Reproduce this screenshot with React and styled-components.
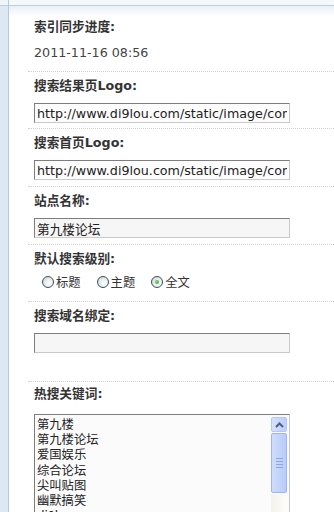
import React from 'react';
import styled, { createGlobalStyle } from 'styled-components';

const GlobalStyle = createGlobalStyle`
  html, body {
    margin: 0;
    padding: 0;
    overflow: hidden;
    background: #ffffff;
  }
  body {
    font-family: "DejaVu Sans", "Noto Sans CJK SC", sans-serif;
    color: #333;
  }
`;

const keywords = ['第九楼', '第九楼论坛', '爱国娱乐', '综合论坛', '尖叫贴图', '幽默搞笑', 'di9lou', '九楼'];

function App() {
  return (
    <>
      <GlobalStyle />
      <Page>
        <Side />
        <Main>
          <TopEdge />
          <Glow />
          <Content>
            <Section $first>
              <Label>索引同步进度:</Label>
              <DateText>2011-11-16 08:56</DateText>
            </Section>

            <Section>
              <Label>搜索结果页Logo:</Label>
              <Field readOnly value="http://www.di9lou.com/static/image/common/logo.png" />
            </Section>

            <Section $wide>
              <Label>搜索首页Logo:</Label>
              <Field readOnly value="http://www.di9lou.com/static/image/common/logo.png" />
            </Section>

            <Section $wide>
              <Label>站点名称:</Label>
              <Field readOnly $gray value="第九楼论坛" />
            </Section>

            <Section $wide>
              <Label>默认搜索级别:</Label>
              <RadioRow>
                <RadioItem><Radio /><span>标题</span></RadioItem>
                <RadioItem><Radio /><span>主题</span></RadioItem>
                <RadioItem><Radio $checked /><span>全文</span></RadioItem>
              </RadioRow>
            </Section>

            <Section $tall>
              <Label>搜索域名绑定:</Label>
              <Field readOnly $gray value="" />
            </Section>

            <Section $last>
              <Label>热搜关键词:</Label>
              <Box>
                <Lines>
                  {keywords.map((k) => (
                    <div key={k}>{k}</div>
                  ))}
                </Lines>
                <Scrollbar>
                  <ScrollButton>
                    <svg width="9" height="6" viewBox="0 0 9 6">
                      <polyline points="1,5 4.5,1.5 8,5" fill="none" stroke="#4d6185" strokeWidth="2" />
                    </svg>
                  </ScrollButton>
                  <Thumb>
                    <Grip />
                    <Grip />
                    <Grip />
                    <Grip />
                  </Thumb>
                  <Track />
                </Scrollbar>
              </Box>
            </Section>
          </Content>
        </Main>
      </Page>
    </>
  );
}

const Page = styled.div`
  display: flex;
  width: 334px;
  height: 512px;
  overflow: hidden;
`;

const Side = styled.div`
  width: 8px;
  flex-shrink: 0;
  border-right: 1px solid #b9c8d7;
  background: linear-gradient(#eef4fa 0 5px, #c2ced9 5px 6px, #dde8f4 6px);
`;

const Main = styled.div`
  flex: 1;
  display: flex;
  flex-direction: column;
  & > * {
    flex-shrink: 0;
  }
`;

const TopEdge = styled.div`
  height: 5px;
  background: #f5f8fb;
  border-bottom: 1px solid #c2ced9;
`;

const Glow = styled.div`
  height: 10px;
  background: linear-gradient(#e7eff8, #ffffff);
`;

const Content = styled.div`
  padding-left: 19px;
`;

const Section = styled.div`
  padding: ${(p) => (p.$first ? '4px 0 11px 6px' : p.$last ? '5px 0 0 6px' : '7px 0 0 6px')};
  padding-bottom: ${(p) => (p.$tall ? '28px' : p.$wide ? '6px' : p.$first || p.$last ? undefined : '5px')};
  border-bottom: ${(p) => (p.$last ? 'none' : '1px dotted #d2d2d2')};
`;

const Label = styled.div`
  font-size: 12.7px;
  line-height: 14px;
  font-weight: 700;
  color: #333;
  white-space: nowrap;
`;

const DateText = styled.div`
  margin-top: 12px;
  font-size: 12.7px;
  line-height: 14px;
  color: #444;
`;

const Field = styled.input`
  display: block;
  box-sizing: border-box;
  margin-top: 10px;
  width: 256px;
  height: 20px;
  padding: 0 2px;
  font-family: "DejaVu Sans", "Noto Sans CJK SC", sans-serif;
  font-size: 12.7px;
  color: #222;
  background: ${(p) => (p.$gray ? '#f6f6f6' : '#fdfdfd')};
  border: 1px solid #c9c9c9;
  border-top-color: #7d7d7d;
  border-left-color: #7d7d7d;
  outline: none;
`;

const RadioRow = styled.div`
  display: flex;
  align-items: center;
  gap: 16px;
  margin-top: 6px;
  height: 20px;
  padding-left: 8px;
  margin-bottom: 3px;
`;

const RadioItem = styled.label`
  display: flex;
  align-items: center;
  gap: 2px;
  font-size: 12.3px;
  color: #333;
  font-family: "Noto Sans CJK SC", sans-serif;
`;

const Radio = styled.span`
  position: relative;
  box-sizing: border-box;
  width: 12px;
  height: 12px;
  border-radius: 50%;
  border: 1px solid #33506c;
  background: radial-gradient(circle at 65% 65%, #ffffff 0%, #e8e8e2 55%, #c8c8c0 100%);

  &::after {
    content: '';
    display: ${(p) => (p.$checked ? 'block' : 'none')};
    position: absolute;
    left: 3px;
    top: 3px;
    width: 4px;
    height: 4px;
    border-radius: 50%;
    background: radial-gradient(circle at 40% 40%, #7ee07e, #21a121);
  }
`;

const Box = styled.div`
  display: flex;
  margin-top: 13px;
  width: 256px;
  height: 140px;
  box-sizing: border-box;
  padding: 2px 2px 0 2px;
  background: #fbfbfb;
  border: 1px solid #c9c9c9;
  border-top-color: #7d7d7d;
  border-left-color: #7d7d7d;
`;

const Lines = styled.div`
  flex: 1;
  font-family: "Noto Sans CJK SC", sans-serif;
  font-size: 12.3px;
  line-height: 15.2px;
  color: #222;
`;

const Scrollbar = styled.div`
  width: 16px;
  display: flex;
  flex-direction: column;
  gap: 1px;
`;

const ScrollButton = styled.div`
  box-sizing: border-box;
  height: 15px;
  display: flex;
  align-items: center;
  justify-content: center;
  border: 1px solid #b3c6f5;
  border-radius: 2px;
  background: linear-gradient(to right, #d6e2fd, #bccefa);
`;

const Thumb = styled.div`
  box-sizing: border-box;
  height: 60px;
  display: flex;
  flex-direction: column;
  align-items: center;
  justify-content: center;
  gap: 2px;
  border: 1px solid #9fb5ee;
  border-radius: 2px;
  background: linear-gradient(to right, #cfdcfd, #b9cbf9);
`;

const Grip = styled.div`
  width: 7px;
  height: 1px;
  background: #8ea4de;
`;

const Track = styled.div`
  flex: 1;
  background: linear-gradient(to right, #f3f1ea, #fdfdfb);
`;

export default App;
